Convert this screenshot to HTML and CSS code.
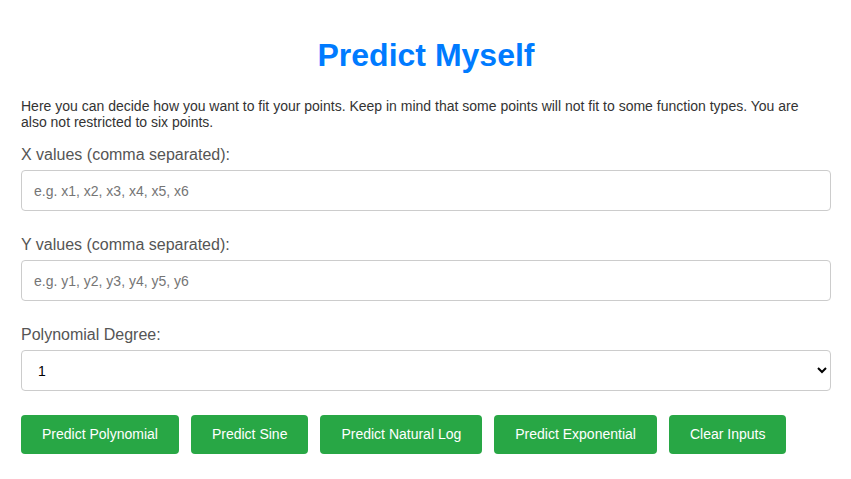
FILE: index.html
```html
<!DOCTYPE html>
<html lang="en">
<head>
<meta charset="utf-8">
<title>Predict Myself</title>
<link rel="stylesheet" href="styles.css">
</head>
<body>
<main class="container">
  <h1>Predict Myself</h1>
  <p class="intro">Here you can decide how you want to fit your points. Keep in mind that some points will not fit to some function types. You are also not restricted to six points.</p>
  <form>
    <div class="field">
      <label for="x-values">X values (comma separated):</label>
      <input type="text" id="x-values" placeholder="e.g. x1, x2, x3, x4, x5, x6">
    </div>
    <div class="field">
      <label for="y-values">Y values (comma separated):</label>
      <input type="text" id="y-values" placeholder="e.g. y1, y2, y3, y4, y5, y6">
    </div>
    <div class="field">
      <label for="degree">Polynomial Degree:</label>
      <select id="degree">
        <option>1</option>
        <option>2</option>
        <option>3</option>
        <option>4</option>
        <option>5</option>
      </select>
    </div>
    <div class="actions">
      <button type="button">Predict Polynomial</button>
      <button type="button">Predict Sine</button>
      <button type="button">Predict Natural Log</button>
      <button type="button">Predict Exponential</button>
      <button type="reset">Clear Inputs</button>
    </div>
  </form>
</main>
</body>
</html>
```
FILE: styles.css
```css
* {
  box-sizing: border-box;
}

body {
  margin: 0;
  background: #fff;
  color: #333;
  font-family: Arial, "Liberation Sans", sans-serif;
}

.container {
  padding: 36px 20px 24px 21px;
}

h1 {
  margin: 0 0 24px;
  color: #007bff;
  font-size: 32px;
  line-height: 38px;
  text-align: center;
}

.intro {
  max-width: 800px;
  margin: 0 0 15px;
  font-size: 14px;
  line-height: 16px;
}

.field {
  margin-bottom: 24px;
}

label {
  display: block;
  margin-bottom: 5px;
  color: #555;
  font-size: 16px;
  line-height: 20px;
}

input,
select {
  display: block;
  width: 100%;
  height: 41px;
  padding: 10px 12px;
  border: 1px solid #ccc;
  border-radius: 4px;
  background: #fff;
  color: #000;
  font-family: inherit;
  font-size: 14px;
}

.actions {
  display: flex;
  flex-wrap: wrap;
  gap: 12px;
}

button {
  padding: 12px 21px;
  border: 0;
  border-radius: 4px;
  background: #28a745;
  color: #fff;
  font-family: inherit;
  font-size: 14px;
  line-height: 15px;
  cursor: pointer;
}
```
